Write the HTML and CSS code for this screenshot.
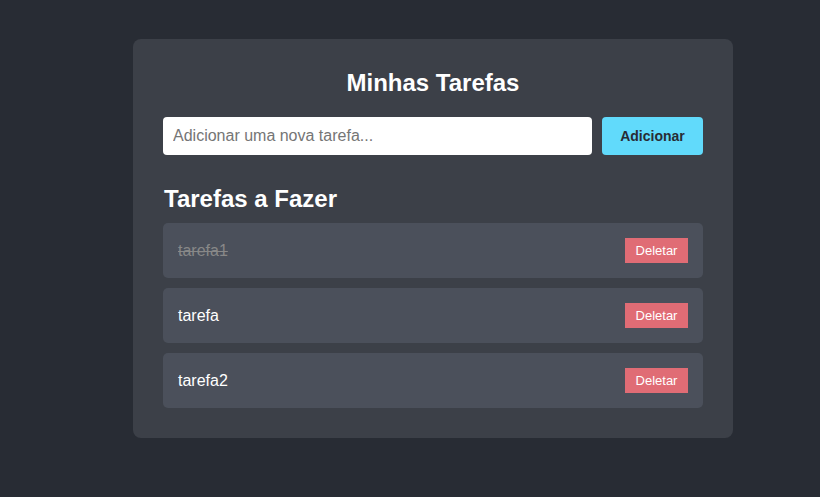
FILE: index.html
```html
<!DOCTYPE html>
<html lang="pt">
<head>
<meta charset="utf-8">
<title>Minhas Tarefas</title>
<link rel="stylesheet" href="styles.css">
</head>
<body>
<div class="card">
  <h1 class="title">Minhas Tarefas</h1>
  <div class="add-row">
    <input class="add-input" type="text" placeholder="Adicionar uma nova tarefa...">
    <button class="add-btn">Adicionar</button>
  </div>
  <h2 class="subtitle">Tarefas a Fazer</h2>
  <ul class="list">
    <li class="item"><span class="item-text done">tarefa1</span><button class="del-btn">Deletar</button></li>
    <li class="item"><span class="item-text">tarefa</span><button class="del-btn">Deletar</button></li>
    <li class="item"><span class="item-text">tarefa2</span><button class="del-btn">Deletar</button></li>
  </ul>
</div>
</body>
</html>
```
FILE: styles.css
```css
* { box-sizing: border-box; }
html, body {
  margin: 0;
  background: #282c34;
  font-family: "Liberation Sans", Arial, sans-serif;
  color: #ffffff;
}
body { padding-top: 39px; }
.card {
  width: 600px;
  margin-left: 133px;
  background: #3c4048;
  border-radius: 8px;
  padding: 30px;
}
.title {
  margin: 0 0 20px;
  text-align: center;
  font-size: 24px;
  font-weight: bold;
}
.add-row {
  display: flex;
  gap: 10px;
}
.add-input {
  flex: 1;
  height: 38px;
  border: none;
  border-radius: 4px;
  padding: 0 10px;
  font-family: "Liberation Sans", Arial, sans-serif;
  font-size: 16px;
  background: #ffffff;
  color: #222;
  outline: none;
}
.add-input::placeholder { color: #757575; }
.add-btn {
  width: 101px;
  height: 38px;
  border: none;
  border-radius: 4px;
  background: #61dafb;
  color: #282c34;
  font-family: "Liberation Sans", Arial, sans-serif;
  font-size: 14px;
  font-weight: bold;
}
.subtitle {
  margin: 30px 0 10px 1px;
  font-size: 24px;
  font-weight: bold;
}
.list {
  list-style: none;
  margin: 0;
  padding: 0;
  display: flex;
  flex-direction: column;
  gap: 10px;
}
.item {
  display: flex;
  align-items: center;
  justify-content: space-between;
  background: #4b505b;
  border-radius: 5px;
  padding: 15px;
  height: 55px;
}
.item-text {
  font-size: 16px;
  color: #ffffff;
}
.item-text.done {
  color: #888888;
  text-decoration: line-through;
}
.del-btn {
  width: 63px;
  height: 25px;
  padding: 0;
  border: none;
  border-radius: 0;
  background: #e06c75;
  color: #ffffff;
  font-family: "Liberation Sans", Arial, sans-serif;
  font-size: 13px;
  text-align: center;
}
```
